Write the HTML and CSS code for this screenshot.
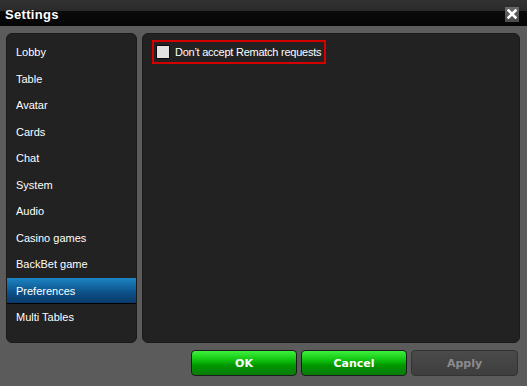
FILE: index.html
```html
<!DOCTYPE html>
<html lang="en">
<head>
    <meta charset="UTF-8">
    <title>Settings</title>
    <link rel="stylesheet" href="styles.css">
</head>
<body>
    <div class="window">
        <div class="titlebar">
            <span class="title">Settings</span>
            <button class="close">
                <svg width="10" height="10" viewBox="0 0 10 10"><path d="M1.5 1.5L8.5 8.5M8.5 1.5L1.5 8.5" stroke="#fff" stroke-width="2.6" stroke-linecap="square"/></svg>
            </button>
        </div>
        <div class="content">
            <ul class="menu">
                <li>Lobby</li>
                <li>Table</li>
                <li>Avatar</li>
                <li>Cards</li>
                <li>Chat</li>
                <li>System</li>
                <li>Audio</li>
                <li>Casino games</li>
                <li>BackBet game</li>
                <li class="active">Preferences</li>
                <li>Multi Tables</li>
            </ul>
            <div class="panel">
                <label class="option">
                    <span class="check"></span>
                    <span class="option-text">Don’t accept Rematch requests</span>
                </label>
            </div>
        </div>
        <div class="footer">
            <button class="btn green">OK</button>
            <button class="btn green">Cancel</button>
            <button class="btn disabled">Apply</button>
        </div>
    </div>
</body>
</html>
```

FILE: styles.css
```css
body{
    margin:0;
    padding:0;
    background:#5b5b5b;
    font-family:"Liberation Sans", Arial, sans-serif;
    font-size:11px;
    color:#fff;
}
.window{
    width:527px;
    height:386px;
    display:flex;
    flex-direction:column;
}
.titlebar{
    height:26px;
    display:flex;
    align-items:center;
    justify-content:space-between;
    padding:0 8px 0 5px;
    box-sizing:border-box;
    background:linear-gradient(#323232 0,#2a2a2a 11px,#0b0b0b 11px,#050505 100%);
}
.title{
    font-size:13px;
    font-weight:bold;
    letter-spacing:0.3px;
    padding-top:2px;
}
.close{
    width:14px;
    height:15px;
    padding:0;
    margin-top:2px;
    border:none;
    background:linear-gradient(#6a6a6a,#4a4a4a);
    display:flex;
    align-items:center;
    justify-content:center;
}
.content{
    display:flex;
    gap:5px;
    padding:7px 7px 0 6px;
    height:310px;
}
.menu{
    width:131px;
    margin:0;
    padding:5px 0 0 0;
    list-style:none;
    background:#222;
    border:1px solid #1a1a1a;
    border-radius:6px;
    box-sizing:border-box;
}
.menu li{
    height:26.5px;
    line-height:26px;
    padding-left:9px;
}
.menu li.active{
    background:linear-gradient(#1b85c4,#0c4f87 60%,#0a3b6a);
    border-bottom:1px solid #000;
    height:25.5px;
}
.panel{
    flex:1;
    background:#222;
    border:1px solid #1a1a1a;
    border-radius:6px;
    padding:6px 9px;
}
.option{
    display:inline-flex;
    align-items:center;
    gap:5px;
    height:20px;
    padding:0 3px 0 2px;
    border:2px solid #d40000;
}
.option-text{
    letter-spacing:-0.25px;
}
.check{
    width:12px;
    height:12px;
    background:#e2e2e2;
    border:1px solid #0a0a0a;
}
.footer{
    display:flex;
    justify-content:flex-end;
    gap:4px;
    padding:7px 9px 0 0;
}
.btn{
    width:106px;
    height:26px;
    border:1px solid #1c1c1c;
    border-radius:4px;
    font-family:"DejaVu Sans", sans-serif;
    font-size:11px;
    font-weight:bold;
    color:#fff;
}
.green{
    background:linear-gradient(#3ef03e,#12c812 35%,#009600 60%,#0a7a0a);
}
.disabled{
    width:107px;
    background:linear-gradient(#4a4a4a,#3e3e3e);
    color:#8c8c8c;
    border-color:#333;
}
```
